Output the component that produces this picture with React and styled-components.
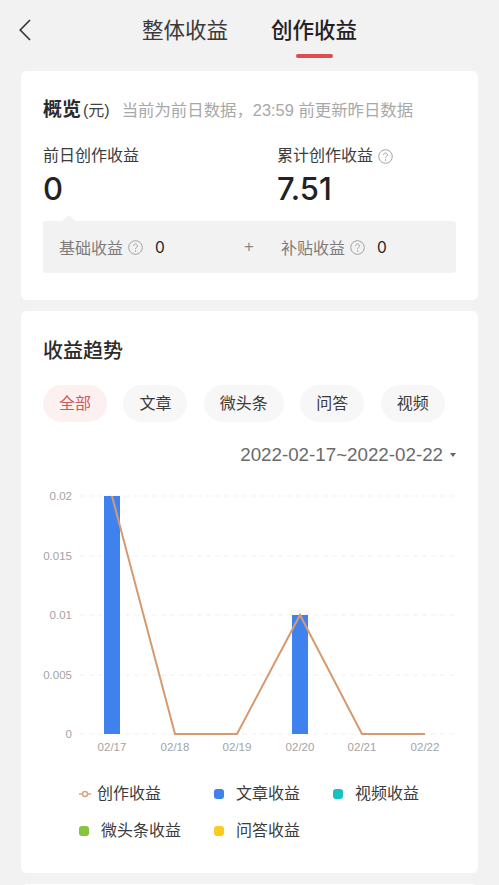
import React from 'react';
import styled, { createGlobalStyle } from 'styled-components';

const FONT = '"Liberation Sans", "Noto Sans CJK SC", sans-serif';

const GlobalStyle = createGlobalStyle`
  html, body {
    margin: 0;
    padding: 0;
    height: 885px;
    overflow: hidden;
    background: #f2f2f2;
    font-family: ${FONT};
  }
`;

const Page = styled.div`
  width: 499px;
  height: 885px;
  overflow: hidden;
  background: #f2f2f2;
  color: #2b2b2b;
`;

const Header = styled.header`
  display: flex;
  align-items: flex-start;
  height: 71px;
  padding: 19px 0 0 19px;
  box-sizing: border-box;
`;

const BackButton = styled.svg`
  width: 12px;
  height: 22px;
  flex: none;
  fill: none;
  stroke: #333;
  stroke-width: 1.6;
`;

const Tabs = styled.nav`
  display: flex;
  gap: 43px;
  margin-left: 111px;
`;

const Tab = styled.div`
  display: flex;
  flex-direction: column;
  align-items: center;
  width: 86px;
  font-size: 21.5px;
  line-height: 24px;
  font-weight: ${(p) => (p.$active ? 500 : 400)};
  color: ${(p) => (p.$active ? '#222' : '#3a3a3a')};

  &::after {
    content: '';
    display: ${(p) => (p.$active ? 'block' : 'none')};
    width: 37px;
    height: 4px;
    margin-top: 11px;
    border-radius: 2px;
    background: #e04a50;
  }
`;

const Card = styled.section`
  margin: 0 21px 11px;
  padding: 0 22px;
  box-sizing: border-box;
  background: #fff;
  border-radius: 6px;
  height: ${(p) => p.$height}px;
`;

const OverviewTitle = styled.div`
  display: flex;
  align-items: baseline;
  padding-top: 26px;
  line-height: 26px;
`;

const OverviewName = styled.span`
  font-size: 19px;
  font-weight: 700;
  color: #2b2b2b;
`;

const Unit = styled.span`
  font-size: 16px;
  color: #444;
  margin-left: 2px;
`;

const Hint = styled.span`
  font-size: 16.4px;
  color: #a8a8a8;
  margin-left: 12px;
  white-space: nowrap;
`;

const Totals = styled.div`
  display: grid;
  grid-template-columns: 234px 1fr;
  margin-top: 19px;
`;

const TotalLabel = styled.div`
  display: flex;
  align-items: center;
  gap: 5px;
  font-size: 16px;
  line-height: 26px;
  color: #3c3c3c;
`;

const TotalValue = styled.div`
  font-size: 31px;
  line-height: 38px;
  font-weight: 500;
  font-family: "Inter", ${FONT};
  color: #222;
  margin-top: 1px;
`;

const Breakdown = styled.div`
  position: relative;
  display: grid;
  grid-template-columns: 185px 37px 1fr;
  align-items: center;
  height: 52px;
  margin-top: 13px;
  padding-left: 16px;
  background: #f2f2f2;
  border-radius: 3px;

  &::before {
    content: '';
    position: absolute;
    left: 19px;
    top: -6px;
    border-left: 7px solid transparent;
    border-right: 7px solid transparent;
    border-bottom: 6px solid #f2f2f2;
  }
`;

const BreakdownItem = styled.div`
  display: flex;
  align-items: center;
  font-size: 16px;
  color: #7c7c7c;
  gap: 5px;
`;

const BreakdownValue = styled.span`
  font-size: 15.5px;
  font-family: "Inter", ${FONT};
  color: #222;
  margin-left: 7px;
`;

const Plus = styled.span`
  font-size: 17px;
  color: #8a8a8a;
`;

const HelpIcon = styled.svg`
  width: 15px;
  height: 15px;
  flex: none;
  fill: none;
  stroke: #a2a2a2;
`;

const SectionTitle = styled.h2`
  margin: 0;
  padding-top: 27px;
  font-size: 20px;
  line-height: 26px;
  font-weight: 500;
  color: #2b2b2b;
`;

const Pills = styled.div`
  display: flex;
  gap: 16.4px;
  margin-top: 21px;
`;

const Pill = styled.div`
  display: flex;
  align-items: center;
  height: 37px;
  padding: 0 16px 3px;
  box-sizing: border-box;
  border-radius: 19px;
  font-size: 16px;
  background: ${(p) => (p.$active ? '#fdf0f0' : '#f7f7f7')};
  color: ${(p) => (p.$active ? '#d0575a' : '#3c3c3c')};
`;

const DateRange = styled.div`
  display: flex;
  justify-content: flex-end;
  align-items: center;
  gap: 7px;
  margin-top: 21px;
  font-size: 18.75px;
  line-height: 24px;
  color: #6a6a6a;
  white-space: nowrap;
`;

const Caret = styled.span`
  width: 0;
  height: 0;
  border-left: 3.5px solid transparent;
  border-right: 3.5px solid transparent;
  border-top: 4px solid #666;
`;

const Chart = styled.svg`
  display: block;
  width: 413px;
  height: 280px;
  margin-top: 13px;
  font-family: ${FONT};
`;

const AxisText = styled.text`
  font-size: 11.5px;
  fill: #a3a3a3;
`;

const Legend = styled.div`
  display: grid;
  grid-template-columns: 135px 119px 1fr;
  row-gap: 14px;
  margin-top: 22px;
  padding-left: 36px;
`;

const LegendItem = styled.div`
  display: flex;
  align-items: center;
  gap: ${(p) => p.$gap}px;
  font-size: 16px;
  line-height: 23px;
  color: #3c3c3c;
  white-space: nowrap;
`;

const LegendDot = styled.span`
  width: 10px;
  height: 10px;
  border-radius: 3px;
  background: ${(p) => p.$color};
`;

const LegendLine = styled.svg`
  width: 12px;
  height: 8px;
  fill: #fff;
  stroke: #d9a585;
  stroke-width: 1.5;
`;

const Help = () => (
  <HelpIcon viewBox="0 0 15 15">
    <circle cx="7.5" cy="7.5" r="6.8" />
    <path d="M5.6 5.9a1.9 1.9 0 1 1 2.9 1.6c-.7.4-1 .8-1 1.6" />
    <circle cx="7.5" cy="11" r=".4" />
  </HelpIcon>
);

const pills = ['全部', '文章', '微头条', '问答', '视频'];
const yTicks = [
  ['0.02', 16],
  ['0.015', 76],
  ['0.01', 135],
  ['0.005', 195],
  ['0', 254],
];
const days = ['02/17', '02/18', '02/19', '02/20', '02/21', '02/22'];
const dayX = [69, 132, 194, 257, 319, 382];
const bars = [
  { x: 61, y: 16, h: 238 },
  { x: 249, y: 135, h: 119 },
];
const line = '69,16 132,254 194,254 257,135 319,254 382,254';

const App = () => (
  <Page>
    <GlobalStyle />
    <Header>
      <BackButton viewBox="0 0 12 22">
        <path d="M11 1 1.2 11 11 21" />
      </BackButton>
      <Tabs>
        <Tab>整体收益</Tab>
        <Tab $active>创作收益</Tab>
      </Tabs>
    </Header>

    <Card $height={229}>
      <OverviewTitle>
        <OverviewName>概览</OverviewName>
        <Unit>(元)</Unit>
        <Hint>当前为前日数据，23:59 前更新昨日数据</Hint>
      </OverviewTitle>
      <Totals>
        <div>
          <TotalLabel>前日创作收益</TotalLabel>
          <TotalValue>0</TotalValue>
        </div>
        <div>
          <TotalLabel>累计创作收益<Help /></TotalLabel>
          <TotalValue>7.51</TotalValue>
        </div>
      </Totals>
      <Breakdown>
        <BreakdownItem>基础收益<Help /><BreakdownValue>0</BreakdownValue></BreakdownItem>
        <Plus>+</Plus>
        <BreakdownItem>补贴收益<Help /><BreakdownValue>0</BreakdownValue></BreakdownItem>
      </Breakdown>
    </Card>

    <Card $height={562}>
      <SectionTitle>收益趋势</SectionTitle>
      <Pills>
        {pills.map((p, i) => (
          <Pill key={p} $active={i === 0}>{p}</Pill>
        ))}
      </Pills>
      <DateRange>2022-02-17~2022-02-22<Caret /></DateRange>
      <Chart viewBox="0 0 413 280">
        {yTicks.map(([label, y]) => (
          <g key={label}>
            <line x1="37" x2="413" y1={y} y2={y} stroke="#f1f1f1" strokeDasharray="5 4" />
            <AxisText x="29" y={y + 4} textAnchor="end">{label}</AxisText>
          </g>
        ))}
        {bars.map((b) => (
          <rect key={b.x} x={b.x} y={b.y} width="16" height={b.h} fill="#3f82ee" />
        ))}
        <polyline points={line} fill="none" stroke="#d69a70" strokeWidth="2" />
        {days.map((d, i) => (
          <AxisText key={d} x={dayX[i]} y="271" textAnchor="middle">{d}</AxisText>
        ))}
      </Chart>
      <Legend>
        <LegendItem $gap={6}>
          <LegendLine viewBox="0 0 12 8">
            <path d="M0 4h12" />
            <circle cx="6" cy="4" r="2.5" />
          </LegendLine>
          创作收益
        </LegendItem>
        <LegendItem $gap={12}><LegendDot $color="#3f82ee" />文章收益</LegendItem>
        <LegendItem $gap={12}><LegendDot $color="#16c2c0" />视频收益</LegendItem>
        <LegendItem $gap={12}><LegendDot $color="#86c440" />微头条收益</LegendItem>
        <LegendItem $gap={12}><LegendDot $color="#fccb1f" />问答收益</LegendItem>
      </Legend>
    </Card>

    <Card $height={40} />
  </Page>
);

export default App;
